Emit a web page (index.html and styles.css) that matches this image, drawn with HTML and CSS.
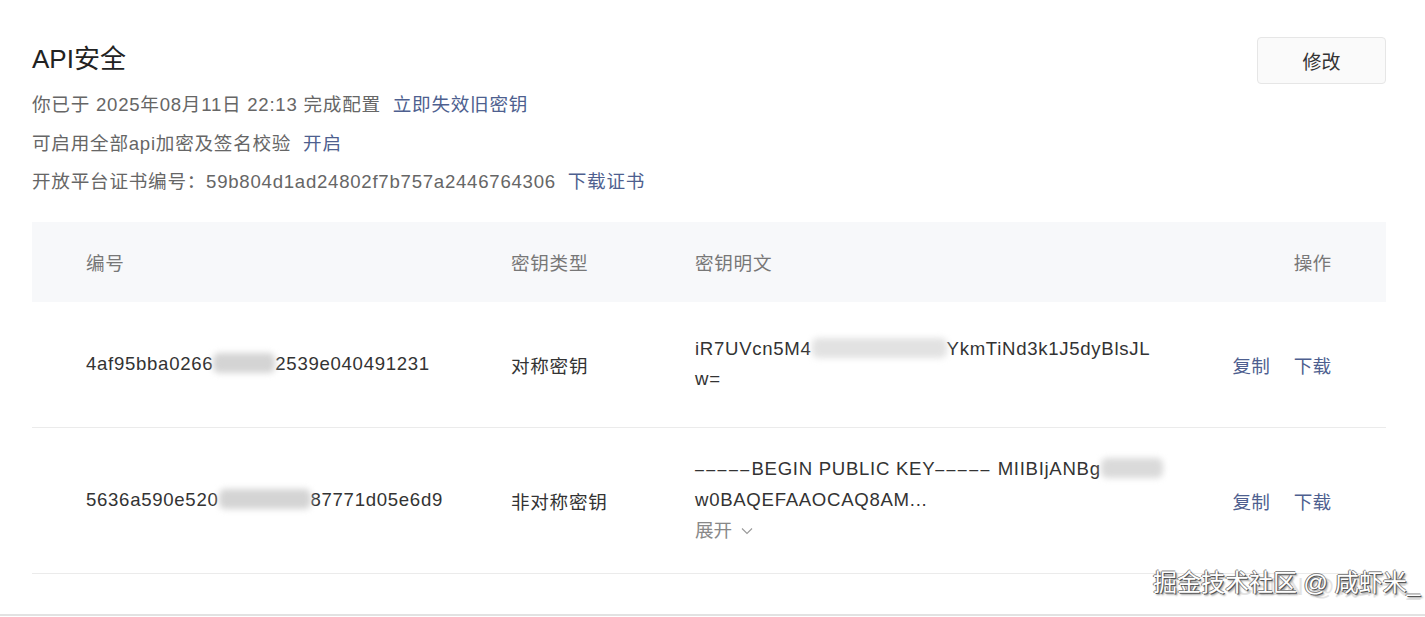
FILE: index.html
```html
<!DOCTYPE html>
<html lang="zh-CN">
<head>
  <meta charset="UTF-8">
  <meta name="viewport" content="width=device-width, initial-scale=1.0">
  <title>API安全</title>
  <link rel="stylesheet" href="styles.css">
</head>
<body>

<div class="page">
  <!-- Summary -->
  <div class="top">
    <div class="info">
      <h2>API安全</h2>
      <p>你已于 2025年08月11日 22:13 完成配置 <a href="#">立即失效旧密钥</a></p>
      <p>可启用全部api加密及签名校验 <a href="#">开启</a></p>
      <p>开放平台证书编号：59b804d1ad24802f7b757a2446764306 <a href="#">下载证书</a></p>
    </div>
    <button class="edit">修改</button>
  </div>

  <!-- Key table -->
  <div class="table">
    <div class="row head">
      <div class="cell first">编号</div>
      <div class="cell">密钥类型</div>
      <div class="cell">密钥明文</div>
      <div class="cell ops">操作</div>
    </div>

    <div class="row one">
      <div class="cell first">4af95bba0266<span class="mask id-mask"></span>2539e040491231</div>
      <div class="cell">对称密钥</div>
      <div class="cell key">iR7UVcn5M4<span class="mask key-mask"></span>YkmTiNd3k1J5dyBlsJL<br>w=</div>
      <div class="cell ops"><a href="#">复制</a><a href="#">下载</a></div>
    </div>

    <div class="row two">
      <div class="cell first">5636a590e520<span class="mask id-mask wide"></span>87771d05e6d9</div>
      <div class="cell">非对称密钥</div>
      <div class="cell key">
        <span class="dash">–––––</span>BEGIN PUBLIC KEY<span class="dash">–––––</span> MIIBIjANBg<span class="mask tail-mask"></span><br>
        w0BAQEFAAOCAQ8AM...<br>
        <span class="expand">展开
          <svg width="12" height="8" viewBox="0 0 12 8"><path d="M1 1.5 L6 6.5 L11 1.5" fill="none" stroke="#999" stroke-width="1.1"/></svg>
        </span>
      </div>
      <div class="cell ops"><a href="#">复制</a><a href="#">下载</a></div>
    </div>
  </div>
</div>

<div class="watermark">
  <span class="under">CSDN @咸虾米_</span>
  <span class="over">掘金技术社区 @ 咸虾米_</span>
</div>

</body>
</html>
```

FILE: styles.css
```css
/* General Reset */
* {
  margin: 0;
  padding: 0;
  box-sizing: border-box;
  font-family: "Liberation Sans", "Noto Sans CJK SC", sans-serif;
}

body {
  background: #fff;
  color: #333;
  overflow: hidden;
}

a {
  color: #4e5f8f;
  text-decoration: none;
}

.page {
  height: 616px;
  padding: 37px 39px 0 32px;
  border-bottom: 2px solid #e2e2e2;
}

/* Summary */
.top {
  display: flex;
  justify-content: space-between;
  align-items: flex-start;
}

.info h2 {
  margin-top: 4px;
  font-size: 26px;
  line-height: 36px;
  font-weight: normal;
  color: #222;
}

.info h2 + p {
  margin-top: 9px;
}

.info p {
  font-size: 18.6px;
  line-height: 38.5px;
  letter-spacing: 0.75px;
  color: #666;
}

.info p a {
  margin-left: 6px;
}

.edit {
  width: 129px;
  height: 47px;
  background: #fafafa;
  border: 1px solid #e6e6e6;
  border-radius: 4px;
  font-size: 19px;
  color: #333;
  cursor: pointer;
}

/* Table */
.table {
  margin-top: 20px;
}

.row {
  display: grid;
  grid-template-columns: 479px 184px 470px 1fr;
  align-items: center;
  font-size: 18.6px;
  letter-spacing: 0.7px;
  border-bottom: 1px solid #ebebeb;
}

.row.head {
  height: 80px;
  background: #f7f8fa;
  color: #777;
  border-bottom: none;
}

.row.one {
  height: 126px;
}

.row.two {
  height: 146px;
}

.cell.first {
  padding-left: 54px;
}

.cell.key {
  line-height: 30.5px;
  white-space: nowrap;
}

.cell.ops {
  text-align: right;
  padding-right: 55px;
  letter-spacing: 0;
}

.cell.ops a + a {
  margin-left: 24px;
}

.dash {
  font-size: 16px;
  letter-spacing: 2.4px;
}

.expand {
  color: #888;
  letter-spacing: 0;
}

.expand svg {
  margin-left: 4px;
  vertical-align: 2px;
}

/* blurred secrets */
.mask {
  display: inline-block;
  height: 20px;
  vertical-align: -3px;
  background: #d4d4d4;
  filter: blur(3px);
  border-radius: 6px;
}

.id-mask {
  width: 62px;
}

.id-mask.wide {
  width: 92px;
}

.key-mask {
  width: 135px;
  background: #e2e2e2;
}

.tail-mask {
  width: 62px;
  background: #dadada;
}

/* Watermark */
.watermark {
  position: absolute;
  right: 5px;
  top: 566px;
  font-size: 24px;
  line-height: 34px;
  white-space: nowrap;
}

.watermark .under {
  position: absolute;
  right: 0;
  top: 4px;
  color: #e4e4e4;
}

.watermark .over {
  position: relative;
  color: #fff;
  text-shadow: 1px 1px 0 #555, -1px 0 0 #777, 0 -1px 0 #888, 2px 2px 2px #999;
}
```
